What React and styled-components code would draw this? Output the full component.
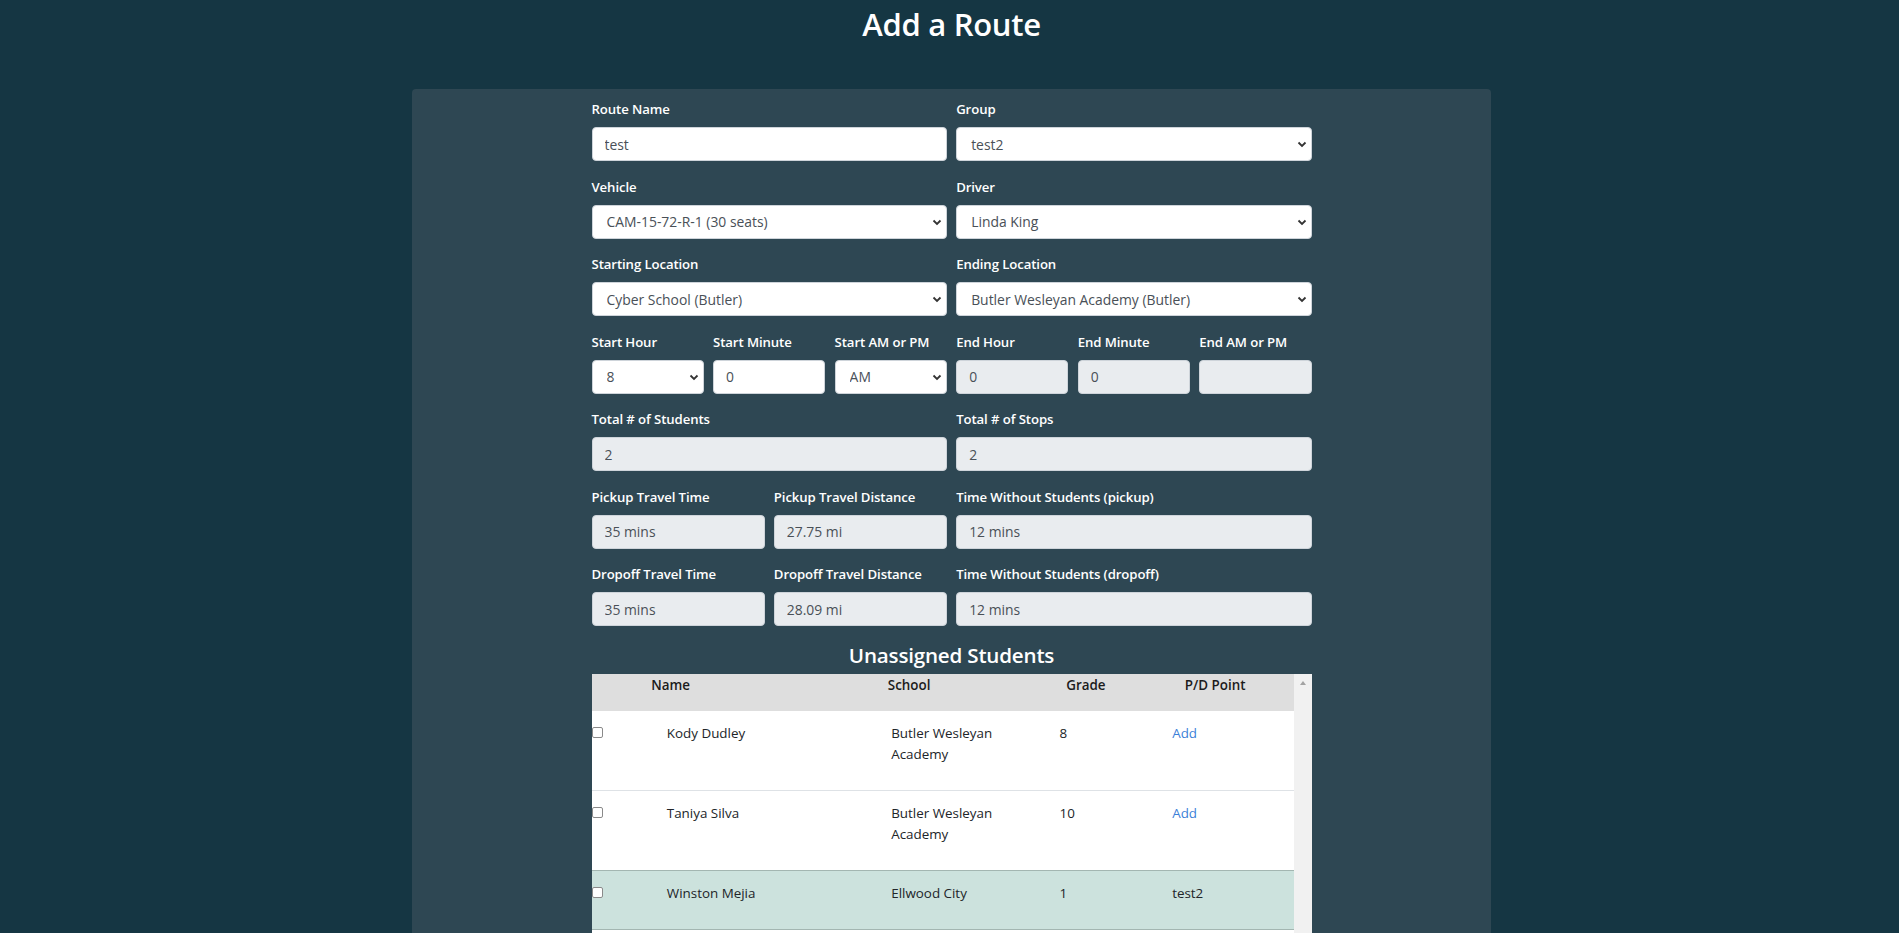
import React from 'react';
import styled, { createGlobalStyle } from 'styled-components';

const GlobalStyle = createGlobalStyle`
  html, body {
    margin: 0;
    overflow: hidden;
    background: #153643;
    font-family: "Open Sans", "Noto Sans", Arial, sans-serif;
  }
`;

const Page = styled.div`
  min-height: 100vh;
  padding-left: 4px;
  box-sizing: border-box;
`;

const Header = styled.header`
  height: 89px;
  box-sizing: border-box;
  padding-top: 5px;
`;

const Title = styled.h1`
  margin: 0;
  text-align: center;
  color: #fff;
  font-size: 31px;
  font-weight: 600;
  line-height: 38px;
  letter-spacing: -0.3px;
`;

const Panel = styled.section`
  width: 1079px;
  margin: 0 auto;
  background: #2e4753;
  border-radius: 4px 4px 0 0;
  padding-top: 10px;
  min-height: 900px;
`;

const Form = styled.form`
  width: 720px;
  margin: 0 auto;
  display: grid;
  grid-template-columns: 1fr 1fr;
  column-gap: 9.3px;
`;

const Group = styled.div`
  display: grid;
  grid-template-columns: repeat(${p => p.$cols}, 1fr);
  column-gap: 9.3px;
`;

const Field = styled.div`
  margin-bottom: 15.5px;
  min-width: 0;
`;

const Label = styled.label`
  display: block;
  color: #fff;
  font-size: 13.2px;
  font-weight: 600;
  line-height: 21px;
  margin-bottom: 7px;
  white-space: nowrap;
  letter-spacing: -0.1px;
`;

const Input = styled.input`
  display: block;
  width: 100%;
  height: 34px;
  box-sizing: border-box;
  padding: 0 12px;
  border: 1px solid #ced4da;
  border-radius: 4px;
  background: #fff;
  color: #495057;
  font-family: inherit;
  font-size: 13.9px;
  &:disabled {
    background: #e9ecef;
    opacity: 1;
  }
`;

const SelectWrap = styled.div`
  position: relative;
`;

const Select = styled.select`
  display: block;
  width: 100%;
  height: 34px;
  box-sizing: border-box;
  padding: 0 24px 0 14px;
  border: 1px solid #ced4da;
  border-radius: 4px;
  background: #fff;
  color: #495057;
  font-family: inherit;
  font-size: 13.9px;
  appearance: none;
`;

const Chevron = styled.svg`
  position: absolute;
  right: 5px;
  top: 50%;
  margin-top: -3px;
  pointer-events: none;
`;

const SectionTitle = styled.h2`
  grid-column: 1 / -1;
  margin: 0 0 6px;
  text-align: center;
  color: #fff;
  font-size: 20.6px;
  font-weight: 600;
  line-height: 26px;
  letter-spacing: -0.2px;
`;

const TableBox = styled.div`
  grid-column: 1 / -1;
  display: flex;
  height: 300px;
  overflow: hidden;
`;

const Table = styled.div`
  flex: 1;
  background: #fff;
  color: #212529;
  font-size: 13.4px;
  line-height: 21px;
`;

const HeadRow = styled.div`
  display: grid;
  grid-template-columns: 59.7px 236.6px 178.4px 118.6px 1fr;
  background: #dedede;
  height: 37px;
  box-sizing: border-box;
  padding-top: 1px;
  font-weight: 600;
  color: #1b1b1b;
`;

const Row = styled.div`
  display: grid;
  grid-template-columns: 75.3px 224.4px 168.3px 112.7px 1fr;
  padding: 12px 0 25px;
  background: ${p => (p.$assigned ? '#cce2dd' : '#fff')};
  border-bottom: 1px solid ${p => (p.$assigned ? '#a3b6b1' : '#dee2e6')};
  border-top: ${p => (p.$assigned ? '1px solid #a3b6b1' : '0')};
  margin-top: ${p => (p.$assigned ? '-1px' : '0')};
`;

const Check = styled.input`
  appearance: none;
  width: 11px;
  height: 11px;
  margin: 3px 0 0;
  border: 1px solid #8a8a8a;
  border-radius: 2px;
  background: #fff;
`;

const SchoolCell = styled.div`
  padding-right: 40px;
`;

const AddLink = styled.a`
  color: #3c7fd8;
  text-decoration: none;
`;

const ScrollRail = styled.div`
  width: 17.5px;
  background: #f1f1f1;
  display: flex;
  justify-content: center;
  padding-top: 7px;
  box-sizing: border-box;
`;

const UpArrow = styled.span`
  width: 0;
  height: 0;
  border-left: 3.5px solid transparent;
  border-right: 3.5px solid transparent;
  border-bottom: 4px solid #a3a3a3;
`;

const students = [
  { name: 'Kody Dudley', school: 'Butler Wesleyan Academy', grade: '8', point: null },
  { name: 'Taniya Silva', school: 'Butler Wesleyan Academy', grade: '10', point: null },
  { name: 'Winston Mejia', school: 'Ellwood City', grade: '1', point: 'test2' },
];

const Arrow = () => (
  <Chevron width="10" height="7" viewBox="0 0 10 7">
    <path d="M1.5 1.5l3.5 3.5 3.5-3.5" fill="none" stroke="#333" strokeWidth="1.8" />
  </Chevron>
);

const TextField = ({ label, value, disabled }) => (
  <Field>
    <Label>{label}</Label>
    <Input defaultValue={value} disabled={disabled} />
  </Field>
);

const SelectField = ({ label, value }) => (
  <Field>
    <Label>{label}</Label>
    <SelectWrap>
      <Select defaultValue={value}>
        <option>{value}</option>
      </Select>
      <Arrow />
    </SelectWrap>
  </Field>
);

const App = () => {
  return (
    <Page>
      <GlobalStyle />
      <Header>
        <Title>Add a Route</Title>
      </Header>
      <Panel>
        <Form onSubmit={e => e.preventDefault()}>
          <TextField label="Route Name" value="test" />
          <SelectField label="Group" value="test2" />
          <SelectField label="Vehicle" value="CAM-15-72-R-1 (30 seats)" />
          <SelectField label="Driver" value="Linda King" />
          <SelectField label="Starting Location" value="Cyber School (Butler)" />
          <SelectField label="Ending Location" value="Butler Wesleyan Academy (Butler)" />

          <Group $cols={3}>
            <SelectField label="Start Hour" value="8" />
            <TextField label="Start Minute" value="0" />
            <SelectField label="Start AM or PM" value="AM" />
          </Group>
          <Group $cols={3}>
            <TextField label="End Hour" value="0" disabled />
            <TextField label="End Minute" value="0" disabled />
            <TextField label="End AM or PM" value="" disabled />
          </Group>

          <TextField label="Total # of Students" value="2" disabled />
          <TextField label="Total # of Stops" value="2" disabled />

          <Group $cols={2}>
            <TextField label="Pickup Travel Time" value="35 mins" disabled />
            <TextField label="Pickup Travel Distance" value="27.75 mi" disabled />
          </Group>
          <TextField label="Time Without Students (pickup)" value="12 mins" disabled />

          <Group $cols={2}>
            <TextField label="Dropoff Travel Time" value="35 mins" disabled />
            <TextField label="Dropoff Travel Distance" value="28.09 mi" disabled />
          </Group>
          <TextField label="Time Without Students (dropoff)" value="12 mins" disabled />

          <SectionTitle>Unassigned Students</SectionTitle>
          <TableBox>
            <Table>
              <HeadRow>
                <div />
                <div>Name</div>
                <div>School</div>
                <div>Grade</div>
                <div>P/D Point</div>
              </HeadRow>
              {students.map((s, i) => (
                <Row key={i} $assigned={!!s.point}>
                  <div>
                    <Check type="checkbox" />
                  </div>
                  <div>{s.name}</div>
                  <SchoolCell>{s.school}</SchoolCell>
                  <div>{s.grade}</div>
                  <div>{s.point ? s.point : <AddLink href="#">Add</AddLink>}</div>
                </Row>
              ))}
            </Table>
            <ScrollRail>
              <UpArrow />
            </ScrollRail>
          </TableBox>
        </Form>
      </Panel>
    </Page>
  );
};

export default App;
